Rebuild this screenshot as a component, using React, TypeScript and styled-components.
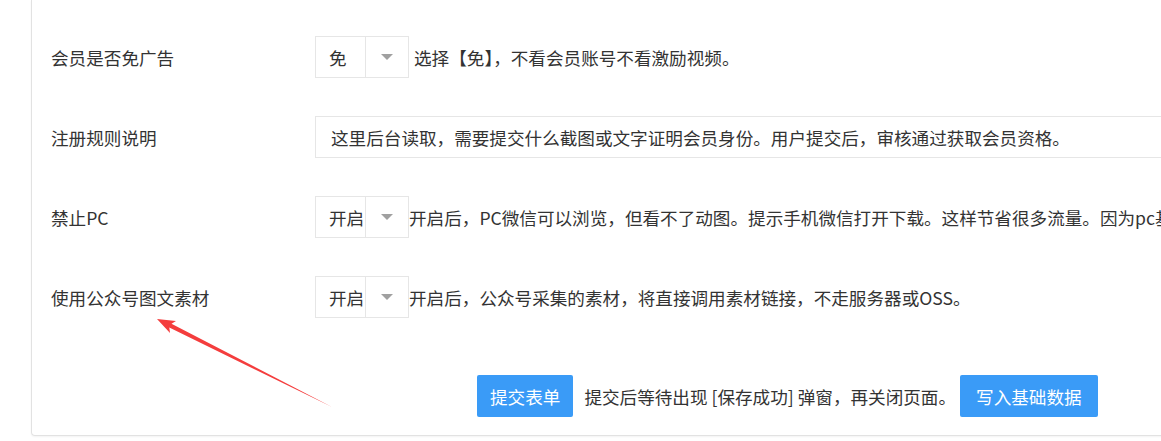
import { type FC } from 'react'
import styled, { createGlobalStyle } from 'styled-components'

const GlobalStyle = createGlobalStyle`
  html, body {
    margin: 0;
    padding: 0;
    background: #fff;
    overflow: hidden;
  }
  body {
    font-family: "Noto Sans CJK SC", "Noto Sans", sans-serif;
    font-size: 17.6px;
    color: #333;
  }
`

const Page = styled.div`
  position: relative;
  width: 1161px;
  height: 441px;
  overflow: hidden;
`

const Card = styled.div`
  margin-left: 31px;
  width: 1400px;
  box-sizing: border-box;
  border: 1px solid #e2e2e2;
  border-top: 0;
  border-radius: 0 0 0 4px;
  box-shadow: 0 1px 2px rgba(0, 0, 0, 0.05);
  padding: 36px 0 18px 19px;
`

const FormRow = styled.div`
  display: flex;
  align-items: center;
  height: 42px;
  margin-bottom: 38px;
`

const Label = styled.div`
  width: 264px;
  flex-shrink: 0;
  color: #333;
`

const Select = styled.div`
  display: flex;
  height: 42px;
  box-sizing: border-box;
  border: 1px solid #e6e6e6;
  flex-shrink: 0;
`

const SelectValue = styled.div`
  width: 49px;
  box-sizing: border-box;
  padding-left: 13px;
  display: flex;
  align-items: center;
  white-space: nowrap;
  color: #333;
`

const SelectArrow = styled.div`
  width: 43px;
  box-sizing: border-box;
  border-left: 1px solid #e6e6e6;
  display: flex;
  align-items: center;
  justify-content: center;

  &::after {
    content: '';
    border-left: 6px solid transparent;
    border-right: 6px solid transparent;
    border-top: 6px solid #a0a0a0;
  }
`

const Hint = styled.span<{ $offset?: number }>`
  margin-left: ${p => p.$offset ?? 0}px;
  white-space: nowrap;
  color: #333;
`

const TextInput = styled.div`
  flex: 1;
  height: 42px;
  box-sizing: border-box;
  border: 1px solid #e6e6e6;
  padding-left: 15px;
  display: flex;
  align-items: center;
  white-space: nowrap;
  color: #333;
`

const ActionRow = styled.div`
  display: flex;
  align-items: center;
  height: 42px;
  margin-top: 57px;
  padding-left: 426px;
`

const Button = styled.button<{ $pad: number }>`
  height: 42px;
  padding: 0 ${p => p.$pad}px;
  border: 0;
  border-radius: 2px;
  background: #3a9bf7;
  color: #fff;
  font-family: inherit;
  font-size: 17.6px;
  white-space: nowrap;
  cursor: pointer;
`

const ActionText = styled.span`
  margin: 0 4px 0 11px;
  white-space: nowrap;
  color: #333;
`

const Annotation = styled.svg`
  position: absolute;
  left: 0;
  top: 0;
  pointer-events: none;
`

interface SelectRow {
  label: string
  value: string
  hint: string
  offset?: number
}

const SelectField: FC<SelectRow> = ({ label, value, hint, offset }) => (
  <FormRow>
    <Label>{label}</Label>
    <Select>
      <SelectValue>{value}</SelectValue>
      <SelectArrow />
    </Select>
    <Hint $offset={offset}>{hint}</Hint>
  </FormRow>
)

export default function App() {
  return (
    <Page>
      <GlobalStyle />
      <Card>
        <SelectField
          label="会员是否免广告"
          value="免"
          hint="选择【免】，不看会员账号不看激励视频。"
          offset={5}
        />
        <FormRow>
          <Label>注册规则说明</Label>
          <TextInput>这里后台读取，需要提交什么截图或文字证明会员身份。用户提交后，审核通过获取会员资格。</TextInput>
        </FormRow>
        <SelectField
          label="禁止PC"
          value="开启"
          hint="开启后，PC微信可以浏览，但看不了动图。提示手机微信打开下载。这样节省很多流量。因为pc基本不需要看动图。"
        />
        <SelectField
          label="使用公众号图文素材"
          value="开启"
          hint="开启后，公众号采集的素材，将直接调用素材链接，不走服务器或OSS。"
        />
        <ActionRow>
          <Button $pad={13}>提交表单</Button>
          <ActionText>提交后等待出现 [保存成功] 弹窗，再关闭页面。</ActionText>
          <Button $pad={16}>写入基础数据</Button>
        </ActionRow>
      </Card>
      <Annotation width="1161" height="441" viewBox="0 0 1161 441">
        <polygon
          points="157,319 176,321 171.5,323.8 332,407 169.3,327.6 170,333"
          fill="#f43d3d"
        />
      </Annotation>
    </Page>
  )
}
